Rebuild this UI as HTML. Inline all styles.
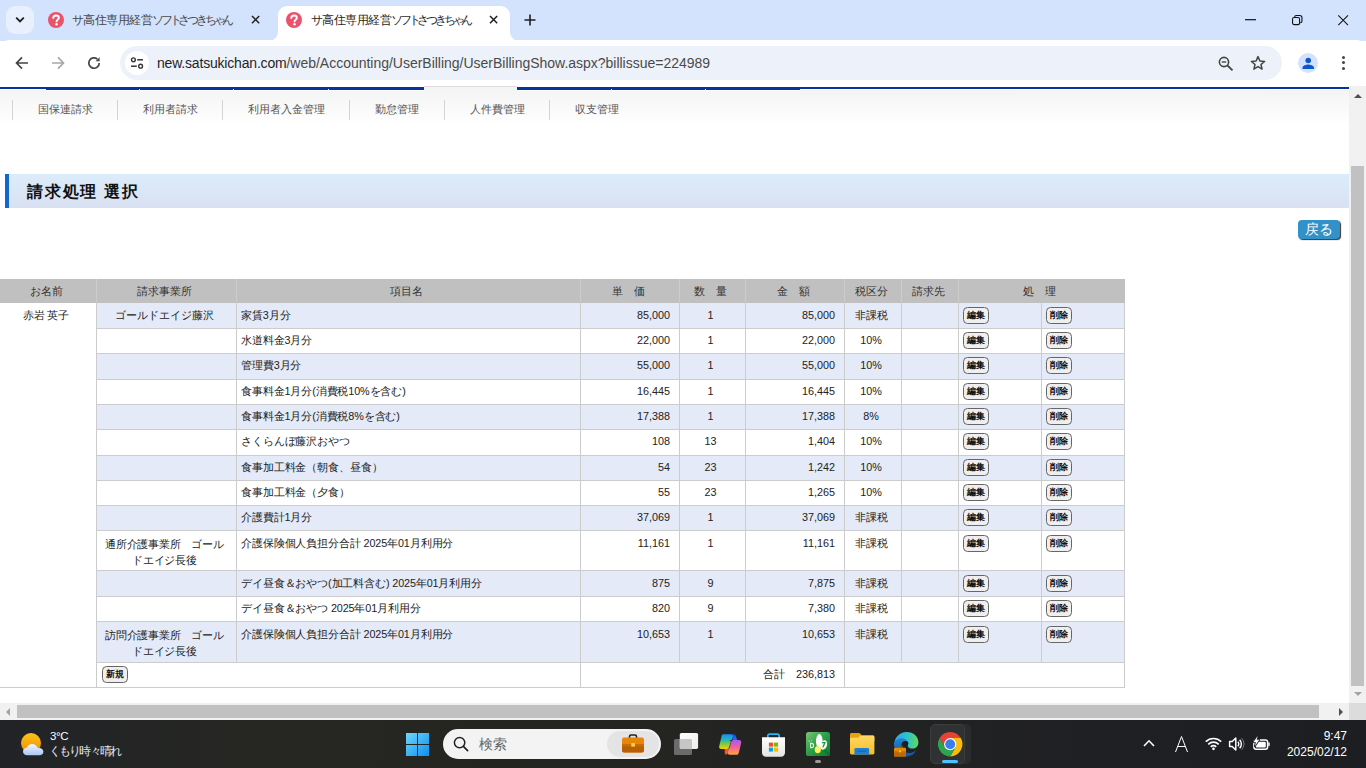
<!DOCTYPE html>
<html lang="ja">
<head>
<meta charset="utf-8">
<title>サ高住専用経営ソフトさつきちゃん</title>
<style>
*{box-sizing:border-box;margin:0;padding:0}
html,body{width:1366px;height:768px;overflow:hidden;background:#fff}
body{font-family:"Liberation Sans",sans-serif;color:#222;-webkit-font-smoothing:antialiased}
#root{position:relative;width:1366px;height:768px;overflow:hidden;background:#fff}
.abs{position:absolute}
svg{position:absolute;overflow:visible}
/* ---------- chrome ---------- */
#tabstrip{position:absolute;left:0;top:0;width:1366px;height:41px;background:#d3e3fd}
#toolbar{position:absolute;left:0;top:40px;width:1366px;height:46px;background:#fff;border-radius:9px 9px 0 0}
.tabtitle{position:absolute;top:12px;height:17px;line-height:17px;font-size:12px;white-space:nowrap;overflow:hidden;color:#1f1f1f}

.tabtitle .k{letter-spacing:-3.2px}.tabtitle .k1{letter-spacing:-1px}.tabtitle .kj{letter-spacing:-.5px}
#omni{position:absolute;left:120px;top:46px;width:1162px;height:34px;border-radius:17px;background:#edf2fa}
#url{letter-spacing:-.19px;position:absolute;left:157px;top:53px;height:20px;line-height:20px;font-size:14px;white-space:nowrap;color:#1f1f1f}
#url span{color:#4a4a4a;letter-spacing:-.015px}
/* ---------- page ---------- */
#page{position:absolute;left:0;top:86px;width:1349px;height:617px;overflow:hidden;background:#fff;font-size:10.8px;color:#222}
.nav{position:absolute;top:15px;height:16px;line-height:16px;color:#555;white-space:nowrap;text-align:center;overflow:hidden}
.sep{position:absolute;top:14px;width:1px;height:20px;background:#d4d4d4}
#title{position:absolute;left:5px;top:88px;width:1344px;height:34px;border-left:4px solid #1268cd;background:linear-gradient(#dcecfa,#d9e1f2)}
#title b{position:absolute;left:18px;top:6px;height:22px;line-height:22px;font-size:16.2px;letter-spacing:1.75px;color:#111;white-space:nowrap}
#back{position:absolute;left:1298px;top:134px;width:42px;height:19px;border-radius:4px;background:#3191c8;box-shadow:1px 1px 1px #333;color:#fff;font-size:14px;line-height:19px;text-align:center;white-space:nowrap;overflow:hidden}
/* table */
#tbl{position:absolute;left:0;top:193px;width:1125px;height:409px}
.hd{padding-right:4px;position:absolute;top:0;height:24px;background:#c0c0c0;line-height:24px;text-align:center;color:#333;white-space:nowrap;overflow:hidden}
.row{position:absolute;left:96px;width:1029px}
.row.alt{background:#e4eaf8}
.c{position:absolute;top:0;height:100%;padding-top:5px;line-height:14px;overflow:hidden;white-space:nowrap}
.tall .c{padding-top:5.8px}
.tall .btn{top:5.3px}
.sh .c{padding-top:6px}
.sh .btn{top:5.2px}
.c.two{line-height:16px;padding-top:5.6px;letter-spacing:-.2px}
.c.it{padding-left:4px;letter-spacing:-.12px}
.vl{position:absolute;width:1px;background:#ccc}
.hl{position:absolute;height:1px;background:#ccc}
.btn{position:absolute;top:4.2px;width:26px;height:16.6px;border:1px solid #666;border-radius:4.5px;background:#efefef;font-size:9px;font-weight:bold;line-height:14.6px;text-align:center;color:#111;white-space:nowrap;overflow:hidden}
/* scrollbars */
#vsb{position:absolute;left:1349px;top:86px;width:17px;height:617px;background:#f1f1f1}
#hsb{position:absolute;left:0;top:703px;width:1349px;height:17px;background:#f1f1f1}
#corner{position:absolute;left:1349px;top:703px;width:17px;height:17px;background:#dcdcdc}
/* taskbar */
#task{position:absolute;left:0;top:720px;width:1366px;height:48px;background:linear-gradient(90deg,#212327 0%,#262723 17%,#252520 38%,#232322 60%,#1f2023 80%,#1d1e22 100%);color:#fff}
</style>
</head>
<body>
<div id="root">
<div id="tabstrip"></div>
<div class="abs" style="left:6px;top:6px;width:28px;height:28px;border-radius:9px;background:#e8effd"></div>
<svg style="left:14px;top:15px" width="12" height="10" viewBox="0 0 12 10"><path d="M2.2 2.6L6 6.4 9.8 2.6" fill="none" stroke="#1f1f1f" stroke-width="1.8"/></svg>
<svg style="left:48px;top:12px" width="16" height="16" viewBox="0 0 16 16"><circle cx="8" cy="8" r="8" fill="#e9546b"/><path d="M5.3 6.1C5.3 4.5 6.5 3.5 8.1 3.5c1.6 0 2.7 1 2.7 2.3 0 1.1-.6 1.7-1.4 2.2-.6.4-.8.7-.8 1.4" fill="none" stroke="#fff" stroke-width="1.9" stroke-linecap="round"/><circle cx="8.5" cy="12.2" r="1.25" fill="#fff"/></svg>
<div class="tabtitle" style="left:72px;width:164px;color:#474747"><span class="k1">サ</span><span class="kj">高住専用経営</span><span class="k">ソフトさつきちゃん</span></div>
<svg style="left:251.4px;top:15.4px" width="9.2" height="9.2" viewBox="-4.6 -4.6 9.2 9.2"><path d="M-3.6 -3.6L3.6 3.6M3.6 -3.6L-3.6 3.6" stroke="#1f1f1f" stroke-width="1.50" fill="none"/></svg>
<svg style="left:268px;top:6px" width="252" height="35" viewBox="0 0 252 35"><path d="M0 35 C6 35 10 31 10 25 V10 C10 4 14 0 20 0 H232 C238 0 242 4 242 10 V25 C242 31 246 35 252 35 Z" fill="#fff"/></svg>
<svg style="left:286px;top:12px" width="16" height="16" viewBox="0 0 16 16"><circle cx="8" cy="8" r="8" fill="#e9546b"/><path d="M5.3 6.1C5.3 4.5 6.5 3.5 8.1 3.5c1.6 0 2.7 1 2.7 2.3 0 1.1-.6 1.7-1.4 2.2-.6.4-.8.7-.8 1.4" fill="none" stroke="#fff" stroke-width="1.9" stroke-linecap="round"/><circle cx="8.5" cy="12.2" r="1.25" fill="#fff"/></svg>
<div class="tabtitle" style="left:311px;width:164px"><span class="k1">サ</span><span class="kj">高住専用経営</span><span class="k">ソフトさつきちゃん</span></div>
<svg style="left:489.4px;top:15.4px" width="9.2" height="9.2" viewBox="-4.6 -4.6 9.2 9.2"><path d="M-3.6 -3.6L3.6 3.6M3.6 -3.6L-3.6 3.6" stroke="#1f1f1f" stroke-width="1.50" fill="none"/></svg>
<svg style="left:523px;top:13px" width="14" height="14" viewBox="0 0 14 14"><path d="M7 1.5V12.5M1.5 7H12.5" stroke="#1f1f1f" stroke-width="1.6" fill="none"/></svg>
<svg style="left:1245px;top:19px" width="11" height="2" viewBox="0 0 11 2"><path d="M0 .7H11" stroke="#111" stroke-width="1.2"/></svg>
<svg style="left:1292px;top:14.5px" width="10.5" height="10.5" viewBox="0 0 11.6 11.6"><rect x=".6" y="2.8" width="7.8" height="7.8" rx="1.8" fill="none" stroke="#111" stroke-width="1.2"/><path d="M3 2.6V2.2C3 1.3 3.7.6 4.6.6H8.6C10 .6 11 1.6 11 3V7C11 7.9 10.3 8.6 9.4 8.6H9" fill="none" stroke="#111" stroke-width="1.2"/></svg>
<svg style="left:1338px;top:14.6px" width="10.3" height="10.3" viewBox="0 0 11 11"><path d="M.3.3L10.7 10.7M10.7.3L.3 10.7" stroke="#111" stroke-width="1.1"/></svg>
<div id="toolbar"></div>
<svg style="left:15px;top:56px" width="14" height="14" viewBox="0 0 14 14"><path d="M13 7H2M7 1.3L1.5 7 7 12.7" fill="none" stroke="#444" stroke-width="1.7"/></svg>
<svg style="left:51px;top:56px" width="14" height="14" viewBox="0 0 14 14"><path d="M1 7H12M7 1.3L12.5 7 7 12.7" fill="none" stroke="#a8a8a8" stroke-width="1.7"/></svg>
<svg style="left:87px;top:56px" width="14" height="14" viewBox="0 0 14 14"><path d="M12.2 7A5.2 5.2 0 1 1 10.4 3.1" fill="none" stroke="#444" stroke-width="1.7"/><path d="M12.6 1.2V5.2H8.6Z" fill="#444"/></svg>
<div id="omni"></div>
<div class="abs" style="left:125px;top:51px;width:24px;height:24px;border-radius:12px;background:#fff"></div>
<svg style="left:130px;top:56px" width="14" height="14" viewBox="0 0 14 14"><circle cx="3.4" cy="3.8" r="1.9" fill="none" stroke="#333" stroke-width="1.4"/><path d="M7.2 3.8H13" stroke="#333" stroke-width="1.5"/><circle cx="10.6" cy="10.2" r="1.9" fill="none" stroke="#333" stroke-width="1.4"/><path d="M1 10.2H6.8" stroke="#333" stroke-width="1.5"/></svg>
<div id="url">new.satsukichan.com<span>/web/Accounting/UserBilling/UserBillingShow.aspx?billissue=224989</span></div>
<svg style="left:1218px;top:56px" width="16" height="15" viewBox="0 0 16 15"><circle cx="6" cy="6" r="4.6" fill="none" stroke="#444" stroke-width="1.6"/><path d="M9.5 9.5L14.5 14.3" stroke="#444" stroke-width="1.8"/><path d="M3.8 6H8.2" stroke="#444" stroke-width="1.4"/></svg>
<svg style="left:1250px;top:55px" width="16" height="16" viewBox="0 0 16 16"><path d="M8 1.6L9.9 6 14.6 6.4 11 9.5 12.1 14.1 8 11.6 3.9 14.1 5 9.5 1.4 6.4 6.1 6Z" fill="none" stroke="#444" stroke-width="1.5" stroke-linejoin="round"/></svg>
<div class="abs" style="left:1297.5px;top:52.8px;width:20.5px;height:20.5px;border-radius:11px;background:#d3e3fd"></div>
<svg style="left:1301.5px;top:56.6px" width="12.5" height="12.5" viewBox="0 0 13 13"><circle cx="6.5" cy="3.6" r="2.9" fill="#0b57d0"/><path d="M.6 12.4V11C.6 8.9 4.5 7.9 6.5 7.9S12.4 8.9 12.4 11V12.4Z" fill="#0b57d0"/></svg>
<div class="abs" style="left:1342.2px;top:56.0px;width:3px;height:3px;border-radius:2px;background:#444"></div>
<div class="abs" style="left:1342.2px;top:61.3px;width:3px;height:3px;border-radius:2px;background:#444"></div>
<div class="abs" style="left:1342.2px;top:66.7px;width:3px;height:3px;border-radius:2px;background:#444"></div>
<div id="page">
<div class="abs" style="left:0;top:3px;width:1349px;height:36px;background:linear-gradient(#f4f4f4,#fff)"></div>
<div class="abs" style="left:424px;top:0;width:93px;height:4px;background:#f4f4f4;border-top:1px solid #ddd"></div>
<div class="abs" style="left:0;top:1px;width:424px;height:2px;background:#0434a0"></div>
<div class="abs" style="left:517px;top:1px;width:832px;height:2px;background:#0434a0"></div>
<div class="abs" style="left:0;top:3px;width:46px;height:1px;background:#fff"></div>
<div class="abs" style="left:800px;top:3px;width:549px;height:1px;background:#fff"></div>
<div class="abs" style="left:46px;top:3px;width:93px;height:2px;background:#0434a0;border-bottom:1px solid #fff"></div>
<div class="abs" style="left:140px;top:3px;width:93px;height:2px;background:#0434a0;border-bottom:1px solid #fff"></div>
<div class="abs" style="left:234px;top:3px;width:94px;height:2px;background:#0434a0;border-bottom:1px solid #fff"></div>
<div class="abs" style="left:329px;top:3px;width:95px;height:2px;background:#0434a0;border-bottom:1px solid #fff"></div>
<div class="abs" style="left:517px;top:3px;width:94px;height:2px;background:#0434a0;border-bottom:1px solid #fff"></div>
<div class="abs" style="left:612px;top:3px;width:93px;height:2px;background:#0434a0;border-bottom:1px solid #fff"></div>
<div class="abs" style="left:706px;top:3px;width:94px;height:2px;background:#0434a0;border-bottom:1px solid #fff"></div>
<div class="sep" style="left:12px"></div>
<div class="sep" style="left:117px"></div>
<div class="sep" style="left:222px"></div>
<div class="sep" style="left:349px"></div>
<div class="sep" style="left:444px"></div>
<div class="sep" style="left:549px"></div>
<div class="nav" style="left:13px;width:104px">国保連請求</div>
<div class="nav" style="left:118px;width:104px">利用者請求</div>
<div class="nav" style="left:223px;width:126px">利用者入金管理</div>
<div class="nav" style="left:350px;width:94px">勤怠管理</div>
<div class="nav" style="left:445px;width:104px">人件費管理</div>
<div class="nav" style="left:550px;width:94px">収支管理</div>
<div id="title"><b>請求処理 選択</b></div>
<div id="back">戻る</div>
<div id="tbl">
<div class="hd" style="left:0;width:1125px"></div>
<div class="hd" style="left:0px;width:96px">お名前</div>
<div class="hd" style="left:97px;width:139px">請求事業所</div>
<div class="hd" style="left:237px;width:343px">項目名</div>
<div class="hd" style="left:581px;width:98px">単　価</div>
<div class="hd" style="left:680px;width:65px">数　量</div>
<div class="hd" style="left:746px;width:98px">金　額</div>
<div class="hd" style="left:845px;width:56px">税区分</div>
<div class="hd" style="left:902px;width:56px">請求先</div>
<div class="hd" style="left:959px;width:165px">処　理</div>
<div class="vl" style="left:96px;top:0;height:24px;background:#cdcdcd"></div>
<div class="vl" style="left:236px;top:0;height:24px;background:#cdcdcd"></div>
<div class="vl" style="left:580px;top:0;height:24px;background:#cdcdcd"></div>
<div class="vl" style="left:679px;top:0;height:24px;background:#cdcdcd"></div>
<div class="vl" style="left:745px;top:0;height:24px;background:#cdcdcd"></div>
<div class="vl" style="left:844px;top:0;height:24px;background:#cdcdcd"></div>
<div class="vl" style="left:901px;top:0;height:24px;background:#cdcdcd"></div>
<div class="vl" style="left:958px;top:0;height:24px;background:#cdcdcd"></div>
<div class="c" style="left:0;top:24px;width:96px;height:384px;text-align:center;padding-top:4.7px;padding-right:4px">赤岩 英子</div>
<div class="row alt" style="top:24px;height:25px">
<div class="c" style="left:1px;width:139px;text-align:center;padding-right:4px">ゴールドエイジ藤沢</div>
<div class="c it" style="left:141px;width:343px">家賃3月分</div>
<div class="c" style="left:485px;width:98px;text-align:right;padding-right:9px">85,000</div>
<div class="c" style="left:584px;width:65px;text-align:center;padding-right:4px">1</div>
<div class="c" style="left:650px;width:98px;text-align:right;padding-right:9px">85,000</div>
<div class="c" style="left:749px;width:56px;text-align:center;padding-right:4px">非課税</div>
<div class="btn" style="left:867px">編集</div>
<div class="btn" style="left:950px">削除</div>
</div>
<div class="row" style="top:49px;height:25px">
<div class="c" style="left:1px;width:139px;text-align:center;padding-right:4px"></div>
<div class="c it" style="left:141px;width:343px">水道料金3月分</div>
<div class="c" style="left:485px;width:98px;text-align:right;padding-right:9px">22,000</div>
<div class="c" style="left:584px;width:65px;text-align:center;padding-right:4px">1</div>
<div class="c" style="left:650px;width:98px;text-align:right;padding-right:9px">22,000</div>
<div class="c" style="left:749px;width:56px;text-align:center;padding-right:4px">10%</div>
<div class="btn" style="left:867px">編集</div>
<div class="btn" style="left:950px">削除</div>
</div>
<div class="row alt" style="top:74px;height:26px">
<div class="c" style="left:1px;width:139px;text-align:center;padding-right:4px"></div>
<div class="c it" style="left:141px;width:343px">管理費3月分</div>
<div class="c" style="left:485px;width:98px;text-align:right;padding-right:9px">55,000</div>
<div class="c" style="left:584px;width:65px;text-align:center;padding-right:4px">1</div>
<div class="c" style="left:650px;width:98px;text-align:right;padding-right:9px">55,000</div>
<div class="c" style="left:749px;width:56px;text-align:center;padding-right:4px">10%</div>
<div class="btn" style="left:867px">編集</div>
<div class="btn" style="left:950px">削除</div>
</div>
<div class="row" style="top:100px;height:25px">
<div class="c" style="left:1px;width:139px;text-align:center;padding-right:4px"></div>
<div class="c it" style="left:141px;width:343px">食事料金1月分(消費税10%を含む)</div>
<div class="c" style="left:485px;width:98px;text-align:right;padding-right:9px">16,445</div>
<div class="c" style="left:584px;width:65px;text-align:center;padding-right:4px">1</div>
<div class="c" style="left:650px;width:98px;text-align:right;padding-right:9px">16,445</div>
<div class="c" style="left:749px;width:56px;text-align:center;padding-right:4px">10%</div>
<div class="btn" style="left:867px">編集</div>
<div class="btn" style="left:950px">削除</div>
</div>
<div class="row alt" style="top:125px;height:25px">
<div class="c" style="left:1px;width:139px;text-align:center;padding-right:4px"></div>
<div class="c it" style="left:141px;width:343px">食事料金1月分(消費税8%を含む)</div>
<div class="c" style="left:485px;width:98px;text-align:right;padding-right:9px">17,388</div>
<div class="c" style="left:584px;width:65px;text-align:center;padding-right:4px">1</div>
<div class="c" style="left:650px;width:98px;text-align:right;padding-right:9px">17,388</div>
<div class="c" style="left:749px;width:56px;text-align:center;padding-right:4px">8%</div>
<div class="btn" style="left:867px">編集</div>
<div class="btn" style="left:950px">削除</div>
</div>
<div class="row" style="top:150px;height:26px">
<div class="c" style="left:1px;width:139px;text-align:center;padding-right:4px"></div>
<div class="c it" style="left:141px;width:343px">さくらんぼ藤沢おやつ</div>
<div class="c" style="left:485px;width:98px;text-align:right;padding-right:9px">108</div>
<div class="c" style="left:584px;width:65px;text-align:center;padding-right:4px">13</div>
<div class="c" style="left:650px;width:98px;text-align:right;padding-right:9px">1,404</div>
<div class="c" style="left:749px;width:56px;text-align:center;padding-right:4px">10%</div>
<div class="btn" style="left:867px">編集</div>
<div class="btn" style="left:950px">削除</div>
</div>
<div class="row alt" style="top:176px;height:25px">
<div class="c" style="left:1px;width:139px;text-align:center;padding-right:4px"></div>
<div class="c it" style="left:141px;width:343px">食事加工料金（朝食、昼食）</div>
<div class="c" style="left:485px;width:98px;text-align:right;padding-right:9px">54</div>
<div class="c" style="left:584px;width:65px;text-align:center;padding-right:4px">23</div>
<div class="c" style="left:650px;width:98px;text-align:right;padding-right:9px">1,242</div>
<div class="c" style="left:749px;width:56px;text-align:center;padding-right:4px">10%</div>
<div class="btn" style="left:867px">編集</div>
<div class="btn" style="left:950px">削除</div>
</div>
<div class="row" style="top:201px;height:25px">
<div class="c" style="left:1px;width:139px;text-align:center;padding-right:4px"></div>
<div class="c it" style="left:141px;width:343px">食事加工料金（夕食）</div>
<div class="c" style="left:485px;width:98px;text-align:right;padding-right:9px">55</div>
<div class="c" style="left:584px;width:65px;text-align:center;padding-right:4px">23</div>
<div class="c" style="left:650px;width:98px;text-align:right;padding-right:9px">1,265</div>
<div class="c" style="left:749px;width:56px;text-align:center;padding-right:4px">10%</div>
<div class="btn" style="left:867px">編集</div>
<div class="btn" style="left:950px">削除</div>
</div>
<div class="row alt" style="top:226px;height:25px">
<div class="c" style="left:1px;width:139px;text-align:center;padding-right:4px"></div>
<div class="c it" style="left:141px;width:343px">介護費計1月分</div>
<div class="c" style="left:485px;width:98px;text-align:right;padding-right:9px">37,069</div>
<div class="c" style="left:584px;width:65px;text-align:center;padding-right:4px">1</div>
<div class="c" style="left:650px;width:98px;text-align:right;padding-right:9px">37,069</div>
<div class="c" style="left:749px;width:56px;text-align:center;padding-right:4px">非課税</div>
<div class="btn" style="left:867px">編集</div>
<div class="btn" style="left:950px">削除</div>
</div>
<div class="row tall" style="top:251px;height:40px">
<div class="c two" style="left:1px;width:139px;text-align:center;padding-right:4px">通所介護事業所　ゴール<br>ドエイジ長後</div>
<div class="c it" style="left:141px;width:343px">介護保険個人負担分合計 2025年01月利用分</div>
<div class="c" style="left:485px;width:98px;text-align:right;padding-right:9px">11,161</div>
<div class="c" style="left:584px;width:65px;text-align:center;padding-right:4px">1</div>
<div class="c" style="left:650px;width:98px;text-align:right;padding-right:9px">11,161</div>
<div class="c" style="left:749px;width:56px;text-align:center;padding-right:4px">非課税</div>
<div class="btn" style="left:867px">編集</div>
<div class="btn" style="left:950px">削除</div>
</div>
<div class="row alt sh" style="top:291px;height:26px">
<div class="c" style="left:1px;width:139px;text-align:center;padding-right:4px"></div>
<div class="c it" style="left:141px;width:343px">デイ昼食＆おやつ(加工料含む) 2025年01月利用分</div>
<div class="c" style="left:485px;width:98px;text-align:right;padding-right:9px">875</div>
<div class="c" style="left:584px;width:65px;text-align:center;padding-right:4px">9</div>
<div class="c" style="left:650px;width:98px;text-align:right;padding-right:9px">7,875</div>
<div class="c" style="left:749px;width:56px;text-align:center;padding-right:4px">非課税</div>
<div class="btn" style="left:867px">編集</div>
<div class="btn" style="left:950px">削除</div>
</div>
<div class="row" style="top:317px;height:25px">
<div class="c" style="left:1px;width:139px;text-align:center;padding-right:4px"></div>
<div class="c it" style="left:141px;width:343px">デイ昼食＆おやつ 2025年01月利用分</div>
<div class="c" style="left:485px;width:98px;text-align:right;padding-right:9px">820</div>
<div class="c" style="left:584px;width:65px;text-align:center;padding-right:4px">9</div>
<div class="c" style="left:650px;width:98px;text-align:right;padding-right:9px">7,380</div>
<div class="c" style="left:749px;width:56px;text-align:center;padding-right:4px">非課税</div>
<div class="btn" style="left:867px">編集</div>
<div class="btn" style="left:950px">削除</div>
</div>
<div class="row alt tall" style="top:342px;height:41px">
<div class="c two" style="left:1px;width:139px;text-align:center;padding-right:4px">訪問介護事業所　ゴール<br>ドエイジ長後</div>
<div class="c it" style="left:141px;width:343px">介護保険個人負担分合計 2025年01月利用分</div>
<div class="c" style="left:485px;width:98px;text-align:right;padding-right:9px">10,653</div>
<div class="c" style="left:584px;width:65px;text-align:center;padding-right:4px">1</div>
<div class="c" style="left:650px;width:98px;text-align:right;padding-right:9px">10,653</div>
<div class="c" style="left:749px;width:56px;text-align:center;padding-right:4px">非課税</div>
<div class="btn" style="left:867px">編集</div>
<div class="btn" style="left:950px">削除</div>
</div>
<div class="row" style="top:383px;height:25px">
<div class="btn" style="left:6px;top:4px;height:17px">新規</div>
<div class="c" style="left:485px;width:263px;text-align:right;padding-right:9px">合計　236,813</div>
</div>
<div class="hl" style="left:96px;top:49px;width:1029px"></div>
<div class="hl" style="left:96px;top:74px;width:1029px"></div>
<div class="hl" style="left:96px;top:100px;width:1029px"></div>
<div class="hl" style="left:96px;top:125px;width:1029px"></div>
<div class="hl" style="left:96px;top:150px;width:1029px"></div>
<div class="hl" style="left:96px;top:176px;width:1029px"></div>
<div class="hl" style="left:96px;top:201px;width:1029px"></div>
<div class="hl" style="left:96px;top:226px;width:1029px"></div>
<div class="hl" style="left:96px;top:251px;width:1029px"></div>
<div class="hl" style="left:96px;top:291px;width:1029px"></div>
<div class="hl" style="left:96px;top:317px;width:1029px"></div>
<div class="hl" style="left:96px;top:342px;width:1029px"></div>
<div class="hl" style="left:96px;top:383px;width:1029px"></div>
<div class="hl" style="left:0;top:408px;width:1125px"></div>
<div class="vl" style="left:96px;top:24px;height:359px"></div>
<div class="vl" style="left:236px;top:24px;height:359px"></div>
<div class="vl" style="left:580px;top:24px;height:359px"></div>
<div class="vl" style="left:679px;top:24px;height:359px"></div>
<div class="vl" style="left:745px;top:24px;height:359px"></div>
<div class="vl" style="left:844px;top:24px;height:359px"></div>
<div class="vl" style="left:901px;top:24px;height:359px"></div>
<div class="vl" style="left:958px;top:24px;height:359px"></div>
<div class="vl" style="left:1041px;top:24px;height:359px"></div>
<div class="vl" style="left:1124px;top:24px;height:359px"></div>
<div class="vl" style="left:96px;top:383px;height:25px"></div>
<div class="vl" style="left:580px;top:383px;height:25px"></div>
<div class="vl" style="left:844px;top:383px;height:25px"></div>
<div class="vl" style="left:1124px;top:383px;height:25px"></div>
</div>
</div>
<div id="vsb"></div>
<svg style="left:1354px;top:94px" width="8" height="4" viewBox="0 0 8 4"><path d="M0 4L4 0 8 4Z" fill="#505050"/></svg>
<div class="abs" style="left:1351px;top:166px;width:13px;height:520px;background:#c1c1c1"></div>
<svg style="left:1354px;top:692px" width="8" height="4" viewBox="0 0 8 4"><path d="M0 0L4 4 8 0Z" fill="#a3a3a3"/></svg>
<div id="hsb"></div>
<svg style="left:6px;top:708px" width="4" height="8" viewBox="0 0 4 8"><path d="M4 0L0 4 4 8Z" fill="#a3a3a3"/></svg>
<div class="abs" style="left:17px;top:705px;width:1302px;height:13px;background:#c1c1c1"></div>
<svg style="left:1339px;top:708px" width="4" height="8" viewBox="0 0 4 8"><path d="M0 0L4 4 0 8Z" fill="#505050"/></svg>
<div id="corner"></div>
<div id="task">
<svg style="left:20px;top:12px" width="24" height="24" viewBox="0 0 24 24"><defs><linearGradient id="sun" x1="0" y1="0" x2="0" y2="1"><stop offset="0" stop-color="#fcc419"/><stop offset="1" stop-color="#f08c00"/></linearGradient><linearGradient id="cld" x1="0" y1="0" x2="0" y2="1"><stop offset="0" stop-color="#f1f6fd"/><stop offset="1" stop-color="#a9c8f1"/></linearGradient></defs><circle cx="11" cy="11" r="10" fill="url(#sun)"/><path d="M7.2 23.2C4.8 23.2 3 21.6 3 19.4 3 17.3 4.7 15.8 6.7 15.7 7.6 13.4 9.8 12 12.2 12 14.9 12 17.1 13.7 17.8 16.1 18.2 16 18.6 16 19 16 21.4 16 23.4 17.6 23.4 19.7 23.4 21.7 21.7 23.2 19.5 23.2Z" fill="url(#cld)"/></svg>
<div class="abs" style="left:50px;top:8px;height:16px;line-height:16px;font-size:11.5px;letter-spacing:-.4px;white-space:nowrap">3°C</div>
<div class="abs" style="left:48.500px;top:23px;height:16px;line-height:16px;font-size:12px;letter-spacing:-1.700px;white-space:nowrap;color:#e6e6e6">くもり時々晴れ</div>
<svg style="left:406px;top:13px" width="23" height="23" viewBox="0 0 23 23"><defs><linearGradient id="wl" x1="0" y1="0" x2="1" y2="1"><stop offset="0" stop-color="#6fd6fb"/><stop offset="1" stop-color="#0f8ff0"/></linearGradient></defs><path d="M0 0H11V11H0ZM12 0H23V11H12ZM0 12H11V23H0ZM12 12H23V23H12Z" fill="url(#wl)"/></svg>
<div class="abs" style="left:443px;top:9px;width:218px;height:30px;border-radius:15px;background:#f3f3f3"></div>
<div class="abs" style="left:607px;top:11px;width:52px;height:26px;border-radius:13px;background:#e4e4e4"></div>
<svg style="left:453px;top:16px" width="16" height="16" viewBox="0 0 16 16"><circle cx="6.6" cy="6.6" r="5.2" fill="none" stroke="#222" stroke-width="1.5"/><path d="M10.4 10.4L14.6 14.6" stroke="#222" stroke-width="1.7" stroke-linecap="round"/></svg>
<div class="abs" style="left:479px;top:14px;height:20px;line-height:20px;font-size:14px;color:#666;white-space:nowrap">検索</div>
<svg style="left:622px;top:14px" width="22" height="19" viewBox="0 0 22 19"><path d="M7.5 4V2.6C7.5 1.7 8.2 1 9.1 1H12.9C13.8 1 14.5 1.7 14.5 2.6V4" fill="none" stroke="#222" stroke-width="1.6"/><rect x="0" y="3.6" width="22" height="15" rx="2" fill="#e8860c"/><rect x="0" y="11" width="22" height="7.6" rx="2" fill="#b65f05"/><rect x="0" y="10" width="22" height="2.4" fill="#c96d06"/><rect x="9.3" y="9.2" width="3.6" height="3.4" fill="#ffd43b"/></svg>
<svg style="left:674px;top:12px" width="25" height="24" viewBox="0 0 25 24"><defs><linearGradient id="tv" x1="0" y1="0" x2="1" y2="1"><stop offset="0" stop-color="#ffffff"/><stop offset="1" stop-color="#ececec"/></linearGradient></defs><rect x="0" y="7.100" width="18" height="15.900" rx="1.600" fill="#6b6b6b"/><rect x="5.800" y=".900" width="18.300" height="16" rx="1.600" fill="url(#tv)"/><path d="M5.800 7.100H16.400C17.300 7.100 18 7.800 18 8.700V16.900H7.400C6.500 16.900 5.800 16.200 5.800 15.300Z" fill="#c6c6c6"/></svg>
<svg style="left:718.800px;top:13.500px" width="22.400" height="20.800" viewBox="0 0 22.400 20.800"><defs><linearGradient id="cp1" x1="0" y1="0" x2="0" y2="1"><stop offset="0" stop-color="#1a8cf4"/><stop offset=".35" stop-color="#22b3c6"/><stop offset=".65" stop-color="#7dc93c"/><stop offset="1" stop-color="#f4d20a"/></linearGradient><linearGradient id="cp2" x1="0" y1="0" x2="0" y2="1"><stop offset="0" stop-color="#a859f3"/><stop offset=".45" stop-color="#ee5ea0"/><stop offset="1" stop-color="#ffa23e"/></linearGradient><linearGradient id="cp3" x1="0" y1="0" x2="1" y2="1"><stop offset="0" stop-color="#0f43cf"/><stop offset="1" stop-color="#2f74f2"/></linearGradient></defs><path d="M10.500 .300H14.200C15.600 .300 16.600 1.100 17 2.400L18.200 6.300H13.800L12.600 2.200C12.300 1.100 11.500 .300 10.500 .300Z" fill="url(#cp3)"/><path d="M5.600 14.600H10.200L8.700 19.300C8.400 20.200 7.900 20.600 7.200 20.600H7C6.400 20.600 6 20.200 5.800 19.500Z" fill="#f0562f"/><path d="M4.300 .300H11.600C13.200 .300 14 1.500 13.600 3L10.400 12.900C10 14.200 9.100 14.900 7.800 14.900H2.300C.700 14.900 -.200 13.700 .200 12.200L2.500 2.400C2.800 1.100 3.400 .300 4.300 .300Z" fill="url(#cp1)"/><path d="M18.100 20.700H10.800C9.200 20.700 8.400 19.500 8.800 18L12 8.100C12.400 6.800 13.300 6.100 14.600 6.100H20.100C21.700 6.100 22.600 7.300 22.200 8.800L19.900 18.600C19.600 19.900 19 20.700 18.100 20.700Z" fill="url(#cp2)"/><path d="M10.200 6.300H12.800L10.400 14.300H9.600C9.900 13.900 10.100 13.500 10.300 12.900L12.100 7.400Z" fill="#232420"/></svg>
<svg style="left:762px;top:12.500px" width="23" height="24" viewBox="0 0 23 24"><defs><linearGradient id="st" x1="0" y1="0" x2="0" y2="1"><stop offset="0" stop-color="#ffffff"/><stop offset="1" stop-color="#e4e4e4"/></linearGradient></defs><path d="M5.800 7V3C5.800 1.900 6.600 1.200 7.700 1.200H15.300C16.400 1.200 17.200 1.900 17.200 3V7" fill="none" stroke="#2bb5f5" stroke-width="1.700"/><path d="M0 4.300H23V19.600C23 22 21.400 23.800 19 23.800H4C1.600 23.800 0 22 0 19.600Z" fill="url(#st)"/><rect x="6.900" y="9.600" width="4.100" height="4" fill="#f25022"/><rect x="12" y="9.600" width="4.100" height="4" fill="#7fba00"/><rect x="6.900" y="14.600" width="4.100" height="4" fill="#00a4ef"/><rect x="12" y="14.600" width="4.100" height="4" fill="#ffb900"/></svg>
<svg style="left:806px;top:12px" width="24" height="24" viewBox="0 0 24 24"><defs><linearGradient id="ga" x1="0" y1="0" x2="1" y2="1"><stop offset="0" stop-color="#79c574"/><stop offset=".45" stop-color="#2fa24b"/><stop offset="1" stop-color="#0c7a30"/></linearGradient></defs><rect width="24" height="24" rx="2.600" fill="url(#ga)"/><path d="M12 16L24 24V21.400L15 14Z" fill="#0b6e2b" opacity=".55"/><ellipse cx="17.700" cy="13" rx="3.300" ry="5" transform="rotate(18 17.700 13)" fill="#f3f6f0"/><ellipse cx="13.300" cy="9.300" rx="3.300" ry="7.200" fill="#fbfcfa"/><path d="M15.900 10.700H18.900L16.900 15.200" fill="none" stroke="#1c9a4c" stroke-width="1.300"/><path d="M4.600 11.400V15.600H5.600C7 15.600 7.600 14.700 7.600 13.500S7 11.400 5.600 11.400Z" fill="none" stroke="#e6f1e2" stroke-width="1.100"/><circle cx="3.200" cy="9.200" r=".600" fill="#cfe8cb"/><circle cx="5.600" cy="8.400" r=".500" fill="#cfe8cb"/><ellipse cx="11.800" cy="17.600" rx="3.200" ry="3.600" fill="#f5e34a"/><path d="M10.400 15.400L9.600 19.600M12 14.800L11.200 20.600M13.600 15.200L12.900 20" stroke="#fffbe0" stroke-width=".700"/></svg>
<div class="abs" style="left:815px;top:40.200px;width:6px;height:2.800px;border-radius:2px;background:#9a9a9a"></div>
<svg style="left:850px;top:13px" width="24.400" height="21.400" viewBox="0 0 24.400 21.400"><defs><linearGradient id="fd" x1="0" y1="0" x2="0" y2="1"><stop offset="0" stop-color="#ffd964"/><stop offset="1" stop-color="#f8bd27"/></linearGradient></defs><path d="M0 1.600C0 .700 .700 0 1.600 0H8.800C9.300 0 9.800 .200 10.200 .600L11.600 2.400H22.800C23.700 2.400 24.400 3.100 24.400 4V8H0Z" fill="#e7a30b"/><path d="M0 4.800H8.200L10.200 2.600H22.800C23.700 2.600 24.400 3.300 24.400 4.200V20C24.400 20.800 23.800 21.400 23 21.400H1.400C.600 21.400 0 20.800 0 20Z" fill="url(#fd)"/><path d="M4.400 21.400V16.600C4.400 15.700 5.100 15 6 15H17.600C18.500 15 19.200 15.700 19.200 16.600V21.400Z" fill="#1b80d6"/><path d="M7.400 18.200H16.200" stroke="#1565b0" stroke-width="1.100"/></svg>
<svg style="left:894px;top:11.600px" width="24.400" height="24.500" viewBox="0 0 24.400 24.500"><defs><linearGradient id="eg1" x1="0" y1="0" x2="1" y2="0"><stop offset="0" stop-color="#2ba6ea"/><stop offset=".55" stop-color="#2fc3c9"/><stop offset="1" stop-color="#63d85a"/></linearGradient><linearGradient id="eg2" x1="0" y1="0" x2="0" y2="1"><stop offset="0" stop-color="#1f86d6"/><stop offset="1" stop-color="#0f53b4"/></linearGradient></defs><path d="M.200 13C.200 5.500 5.600 0 12.600 0 19.500 0 24.400 4.800 24.400 10.200 24.400 14.200 21.800 16.600 18.600 16.600 15.600 16.600 13.600 15.400 13.800 13.400 14 12.400 14.400 12 14.400 11.200 14.400 9.800 13.200 8.800 11.600 8.800 8.200 8.800 5.400 11.400 5.400 15 2.800 15 .200 14.600 .200 13Z" fill="url(#eg1)"/><path d="M.200 12.600C.200 8.600 3.600 6.200 7.400 6.200 10.600 6.200 12.600 7.600 13.400 9 12.800 8.800 12.200 8.800 11.600 8.800 8.600 8.800 7.400 11.200 7.400 13.400 7.400 18 11.200 21 15.600 21 18.400 21 20.600 19.800 22.200 18.200 20.400 22 16.800 24.500 12.400 24.500 5.600 24.500 .200 19.400 .200 12.600Z" fill="url(#eg2)"/><ellipse cx="11.800" cy="11.800" rx="2.300" ry="2" fill="#1c1d1f"/><path d="M4.800 16V14.900C4.800 14.300 5.200 14 5.800 14H7.400C8 14 8.400 14.300 8.400 14.900V16" fill="none" stroke="#8a5a12" stroke-width="1"/><rect x="0" y="15.800" width="12" height="8.700" rx="1" fill="#e08a0d"/><rect x="0" y="19.400" width="12" height="5.100" rx="1" fill="#b96a06"/><rect x="0" y="19" width="12" height="1.400" fill="#c77708"/><rect x="5.200" y="18.600" width="1.700" height="1.700" fill="#ffd43b"/></svg>
<div class="abs" style="left:936px;top:4px;width:35px;height:40px;border-radius:5px;background:#2b2c2d"></div>
<div class="abs" style="left:930px;top:4px;width:35px;height:40px;border-radius:5px;background:#303132;border:1px solid #3b3c3d"></div>
<svg style="left:937.900px;top:11.700px" width="24.400" height="24.400" viewBox="-12.200 -12.200 24.400 24.400"><path d="M-10.57 -6.10 A12.2 12.2 0 0 1 10.57 -6.10 L0.00 -6.10 L-5.28 3.05 Z" fill="#e94235"/><path d="M10.57 -6.10 A12.2 12.2 0 0 1 0.00 12.20 L5.28 3.05 L0.00 -6.10 Z" fill="#fbbd0a"/><path d="M0.00 12.20 A12.2 12.2 0 0 1 -10.57 -6.10 L-5.28 3.05 L5.28 3.05 Z" fill="#2da44e"/><circle cx="0" cy="0" r="6.100" fill="#fff"/><circle cx="0" cy="0" r="4.950" fill="#3b7ded"/></svg>
<div class="abs" style="left:942px;top:40px;width:16px;height:3px;border-radius:2px;background:#4cc2ff"></div>
<svg style="left:1143px;top:19.300px" width="12" height="8" viewBox="0 0 12 8"><path d="M1 7L6 1.800 11 7" fill="none" stroke="#fff" stroke-width="1.600"/></svg>
<svg style="left:1175px;top:16px" width="13" height="16" viewBox="0 0 13 16"><path d="M.500 16L6.500 .500 12.500 16M2.800 10.500H10.200" fill="none" stroke="#fff" stroke-width="1"/></svg>
<svg style="left:1205px;top:17px" width="17" height="13" viewBox="0 0 17 13"><path d="M.800 4.600A11 11 0 0 1 16.200 4.600" fill="none" stroke="#fff" stroke-width="1.650"/><path d="M3.300 7.300A7.400 7.400 0 0 1 13.700 7.300" fill="none" stroke="#fff" stroke-width="1.650"/><path d="M5.800 9.800A3.800 3.800 0 0 1 11.200 9.800" fill="none" stroke="#fff" stroke-width="1.650"/><circle cx="8.500" cy="11.800" r="1.350" fill="#fff"/></svg>
<svg style="left:1229px;top:17px" width="16" height="14" viewBox="0 0 16 14"><path d="M.600 4.500H3.200L6.800 1V13L3.200 9.500H.600Z" fill="none" stroke="#fff" stroke-width="1.450" stroke-linejoin="round"/><path d="M8.800 4.800A3 3 0 0 1 8.800 9.200" fill="none" stroke="#fff" stroke-width="1.450"/><path d="M10.600 2.900A5.600 5.600 0 0 1 10.600 11.100" fill="none" stroke="#fff" stroke-width="1.450"/><path d="M12.600 1.200A8 8 0 0 1 12.600 12.800" fill="none" stroke="#777" stroke-width="1"/></svg>
<svg style="left:1252.500px;top:15.500px" width="17" height="14" viewBox="0 0 17 14"><rect x=".900" y="3.900" width="13.700" height="9.300" rx="2.200" fill="none" stroke="#fff" stroke-width="1.500"/><rect x="15.300" y="6.200" width="1.400" height="4" rx=".700" fill="#fff"/><rect x="2.700" y="5.700" width="10.100" height="5.700" rx="1" fill="#fff"/><path d="M4.600 0L.400 6.200H3L1.800 10.200 6.200 3.800H3.700Z" fill="#fff" stroke="#1e1f23" stroke-width="1.700" paint-order="stroke" stroke-linejoin="round"/></svg>
<div class="abs" style="left:1266px;top:8px;width:81px;height:16px;line-height:16px;font-size:12px;text-align:right;white-space:nowrap">9:47</div>
<div class="abs" style="left:1266px;top:24px;width:81px;height:16px;line-height:16px;font-size:12px;text-align:right;white-space:nowrap">2025/02/12</div>
</div>
</div>
</body>
</html>
